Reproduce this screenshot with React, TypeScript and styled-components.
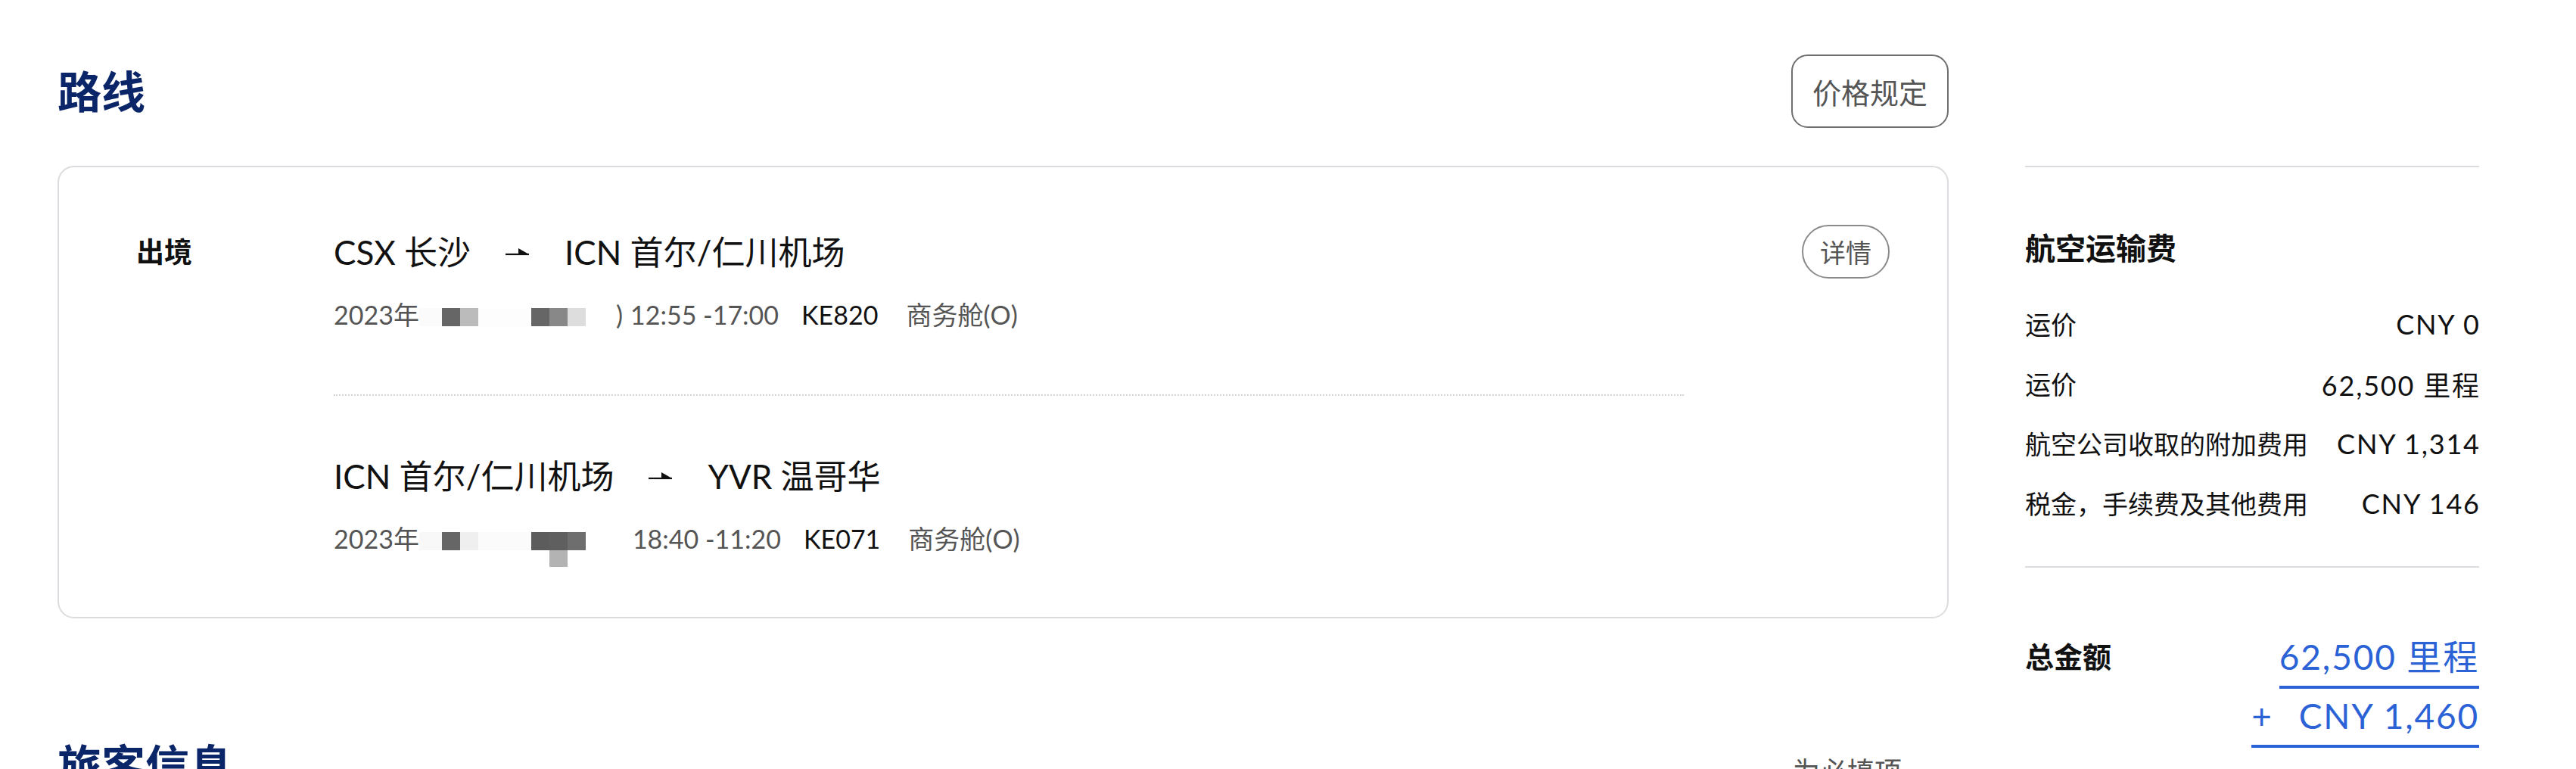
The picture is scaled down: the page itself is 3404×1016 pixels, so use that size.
import styled, { createGlobalStyle } from 'styled-components';

const GlobalStyle = createGlobalStyle`
  html, body {
    margin: 0;
    padding: 0;
    background: #ffffff;
    overflow: hidden;
  }
  body {
    font-family: "Lato", "Noto Sans CJK SC", sans-serif;
    color: #111111;
  }
`;

const NAVY = '#0b2569';
const BLUE = '#2b62d6';

const Page = styled.div`
  display: flex;
  align-items: flex-start;
  width: 3404px;
  height: 1016px;
  box-sizing: border-box;
  padding: 72px 0 0 76px;
  overflow: hidden;
`;

const Main = styled.div`
  width: 2499px;
  flex-shrink: 0;
`;

const HeaderRow = styled.div`
  display: flex;
  justify-content: space-between;
  align-items: center;
  height: 97px;
`;

const Title = styled.h2`
  margin: 0;
  font-size: 58px;
  line-height: 70px;
  font-weight: 700;
  color: ${NAVY};
`;

const RuleButton = styled.button`
  height: 97px;
  padding: 0 26px;
  border: 2px solid #6e6e6e;
  border-radius: 22px;
  background: #ffffff;
  font-family: inherit;
  font-size: 38px;
  color: #555555;
`;

const Card = styled.div`
  display: flex;
  align-items: flex-start;
  margin-top: 50px;
  padding: 0 76px 0 102px;
  border: 2px solid #dcdce0;
  border-radius: 22px;
`;

const DirectionLabel = styled.div`
  width: 261px;
  flex-shrink: 0;
  margin-top: 82px;
  font-size: 37px;
  line-height: 60px;
  font-weight: 700;
  color: #111111;
`;

const Segments = styled.div`
  width: 1784px;
  flex-shrink: 0;
`;

const Segment = styled.div`
  padding: 82px 0;

  & + & {
    border-top: 2px dotted #d4d4d4;
    padding: 76px 0 80px;
  }
`;

const RouteLine = styled.div`
  display: flex;
  align-items: center;
  font-size: 44px;
  line-height: 60px;
  color: #111111;
`;

const ArrowIcon = styled.svg`
  width: 32px;
  height: 14px;
  margin: 0 46px;
  flex-shrink: 0;
`;

const DateLine = styled.div`
  display: flex;
  align-items: center;
  margin-top: 30px;
  font-size: 34px;
  line-height: 46px;
  color: #555555;
`;

const Mosaic = styled.span`
  display: inline-flex;
  align-items: flex-start;
  height: 46px;
  padding-top: 14px;
  box-sizing: border-box;
`;

const MosaicCell = styled.span<{ $w: number; $c: string; $below?: string }>`
  display: block;
  width: ${(p) => p.$w}px;
  height: 24px;
  background: ${(p) => p.$c};
  box-shadow: ${(p) => (p.$below ? `0 22px 0 ${p.$below}` : 'none')};
`;

const Paren = styled.span`
  margin-left: 40px;
  margin-right: 10px;
`;

const Time = styled.span<{ $gap?: number }>`
  margin-left: ${(p) => p.$gap || 0}px;
`;

const FlightNo = styled.span`
  margin-left: 30px;
  color: #111111;
`;

const Cabin = styled.span`
  margin-left: 37px;
`;

const DetailButton = styled.button`
  margin-top: 76px;
  margin-left: auto;
  height: 71px;
  padding: 0 22px;
  flex-shrink: 0;
  border: 2px solid #8a8a8a;
  border-radius: 36px;
  background: #ffffff;
  font-family: inherit;
  font-size: 34px;
  color: #555555;
`;

const PassengerRow = styled.div`
  display: flex;
  justify-content: space-between;
  align-items: baseline;
  margin-top: 159px;
`;

const RequiredNote = styled.span`
  padding-right: 62px;
  font-size: 36px;
  color: #555555;
`;

const Aside = styled.aside`
  width: 600px;
  flex-shrink: 0;
  margin-left: 101px;
  padding-top: 147px;
`;

const FareBlock = styled.div`
  border-top: 2px solid #dcdce0;
  border-bottom: 2px solid #dcdce0;
  padding: 80px 0 44px;
`;

const FareTitle = styled.div`
  font-size: 40px;
  line-height: 54px;
  font-weight: 700;
`;

const FareRows = styled.div`
  margin-top: 33px;
`;

const FareRow = styled.div`
  display: flex;
  justify-content: space-between;
  align-items: center;
  height: 79px;
`;

const FareLabel = styled.span`
  font-size: 34px;
  color: #111111;
`;

const FareValue = styled.span`
  font-size: 36px;
  letter-spacing: 0.05em;
  margin-right: -0.05em;
  color: #111111;
`;

const TotalRow = styled.div`
  display: flex;
  justify-content: space-between;
  align-items: flex-start;
  padding-top: 90px;
`;

const TotalLabel = styled.span`
  font-size: 38px;
  line-height: 55px;
  font-weight: 700;
`;

const TotalValues = styled.div`
  display: flex;
  flex-direction: column;
  align-items: flex-end;
`;

const TotalAmount = styled.span`
  font-size: 46px;
  line-height: 55px;
  letter-spacing: 0.04em;
  color: ${BLUE};
  padding-bottom: 11px;
  border-bottom: 4px solid ${BLUE};

  & + & {
    margin-top: 8px;
  }
`;

const Plus = styled.span`
  margin-right: 34px;
`;

const Arrow = () => (
  <ArrowIcon viewBox="0 0 32 14">
    <line x1="0" y1="10" x2="31" y2="10" stroke="#111" strokeWidth="2.2" />
    <polygon points="17,2 31,10 17,10" fill="#111" />
  </ArrowIcon>
);

type Cell = { w: number; c: string; below?: string };

const mosaicA: Cell[] = [
  { w: 30, c: '#fbfbfb' },
  { w: 24, c: '#666666' },
  { w: 24, c: '#bbbbbb' },
  { w: 70, c: '#fdfdfd' },
  { w: 24, c: '#666666' },
  { w: 24, c: '#888888' },
  { w: 24, c: '#dddddd' },
];

const mosaicB: Cell[] = [
  { w: 30, c: '#f8f8f8' },
  { w: 24, c: '#666666' },
  { w: 24, c: '#efefef' },
  { w: 70, c: '#fbfbfb' },
  { w: 24, c: '#5c5c5c' },
  { w: 24, c: '#5f5f5f', below: '#b3b3b3' },
  { w: 24, c: '#6e6e6e' },
];

const segments = [
  {
    from: 'CSX 长沙',
    to: 'ICN 首尔/仁川机场',
    mosaic: mosaicA,
    paren: true,
    time: '12:55 -17:00',
    flight: 'KE820',
  },
  {
    from: 'ICN 首尔/仁川机场',
    to: 'YVR 温哥华',
    mosaic: mosaicB,
    paren: false,
    time: '18:40 -11:20',
    flight: 'KE071',
  },
];

const fares = [
  { label: '运价', value: 'CNY 0' },
  { label: '运价', value: '62,500 里程' },
  { label: '航空公司收取的附加费用', value: 'CNY 1,314' },
  { label: '税金，手续费及其他费用', value: 'CNY 146' },
];

const App = () => {
  return (
    <>
      <GlobalStyle />
      <Page>
        <Main>
          <HeaderRow>
            <Title>路线</Title>
            <RuleButton>价格规定</RuleButton>
          </HeaderRow>

          <Card>
            <DirectionLabel>出境</DirectionLabel>
            <Segments>
              {segments.map((s) => (
                <Segment key={s.flight}>
                  <RouteLine>
                    <span>{s.from}</span>
                    <Arrow />
                    <span>{s.to}</span>
                  </RouteLine>
                  <DateLine>
                    <span>2023年</span>
                    <Mosaic>
                      {s.mosaic.map((c, i) => (
                        <MosaicCell key={i} $w={c.w} $c={c.c} $below={c.below} />
                      ))}
                    </Mosaic>
                    {s.paren && <Paren>)</Paren>}
                    <Time $gap={s.paren ? 0 : 62}>{s.time}</Time>
                    <FlightNo>{s.flight}</FlightNo>
                    <Cabin>商务舱(O)</Cabin>
                  </DateLine>
                </Segment>
              ))}
            </Segments>
            <DetailButton>详情</DetailButton>
          </Card>

          <PassengerRow>
            <Title>旅客信息</Title>
            <RequiredNote>为必填项</RequiredNote>
          </PassengerRow>
        </Main>

        <Aside>
          <FareBlock>
            <FareTitle>航空运输费</FareTitle>
            <FareRows>
              {fares.map((f, i) => (
                <FareRow key={i}>
                  <FareLabel>{f.label}</FareLabel>
                  <FareValue>{f.value}</FareValue>
                </FareRow>
              ))}
            </FareRows>
          </FareBlock>
          <TotalRow>
            <TotalLabel>总金额</TotalLabel>
            <TotalValues>
              <TotalAmount>62,500 里程</TotalAmount>
              <TotalAmount>
                <Plus>+</Plus>CNY 1,460
              </TotalAmount>
            </TotalValues>
          </TotalRow>
        </Aside>
      </Page>
    </>
  );
};

export default App;
